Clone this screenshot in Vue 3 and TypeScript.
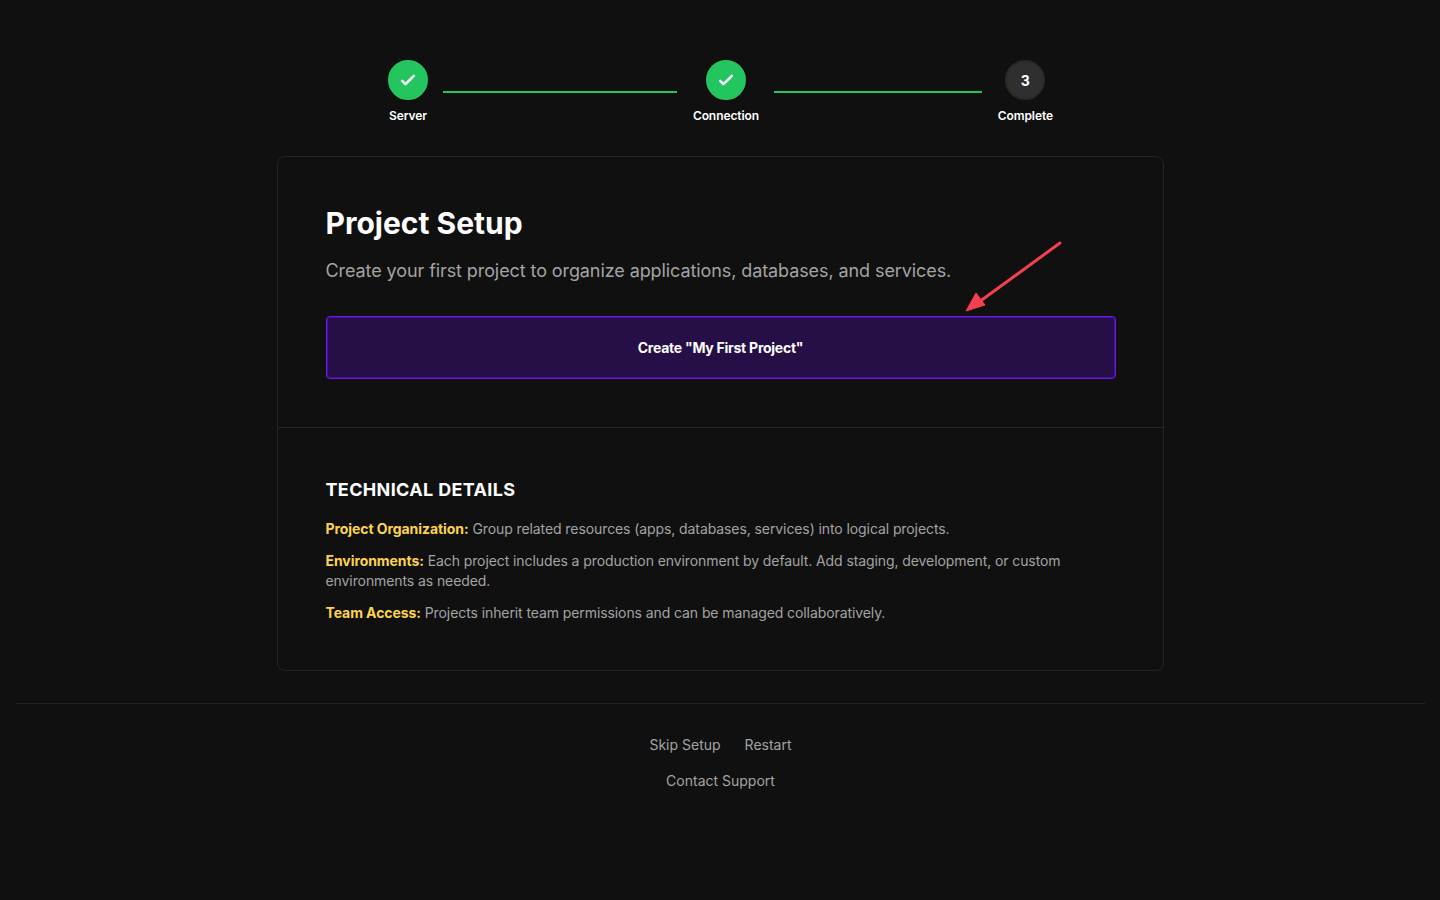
<template>
  <div class="page">
    <div class="stepper">
      <div v-for="step in steps" :key="step.label" class="step-wrap" :class="{ last: step.num === 3 }">
        <div class="step">
          <div class="circle" :class="{ done: step.done }">
            <svg v-if="step.done" width="20" height="20" viewBox="0 0 24 24" fill="none" stroke="#fff" stroke-width="3" stroke-linecap="round" stroke-linejoin="round">
              <path d="M5 13l4 4L19 7" />
            </svg>
            <span v-else>{{ step.num }}</span>
          </div>
          <span class="step-label">{{ step.label }}</span>
        </div>
        <div v-if="step.num !== 3" class="line"></div>
      </div>
    </div>

    <div class="card">
      <div class="card-top">
        <h1>Project Setup</h1>
        <p class="lead">Create your first project to organize applications, databases, and services.</p>
        <button class="create">Create "My First Project"</button>
        <svg class="arrow" width="110" height="84" viewBox="0 0 110 84">
          <path d="M98 6 L17 65" stroke="#f43f4e" stroke-width="3" stroke-linecap="round" fill="none" />
          <path d="M4 74 L14 56 L23 68 Z" fill="#f43f4e" stroke="#f43f4e" stroke-width="1" stroke-linejoin="round" />
        </svg>
      </div>
      <div class="card-bottom">
        <h2>TECHNICAL DETAILS</h2>
        <div class="details">
          <p v-for="item in details" :key="item.title"><strong>{{ item.title }}</strong> {{ item.text }}</p>
        </div>
      </div>
    </div>

    <footer class="foot">
      <div class="links">
        <a v-for="link in links" :key="link">{{ link }}</a>
      </div>
    </footer>
  </div>
</template>

<script setup lang="ts">
const steps = [
  { num: 1, label: 'Server', done: true },
  { num: 2, label: 'Connection', done: true },
  { num: 3, label: 'Complete', done: false },
]

const details = [
  { title: 'Project Organization:', text: 'Group related resources (apps, databases, services) into logical projects.' },
  { title: 'Environments:', text: 'Each project includes a production environment by default. Add staging, development, or custom environments as needed.' },
  { title: 'Team Access:', text: 'Projects inherit team permissions and can be managed collaboratively.' },
]

const links = ['Skip Setup', 'Restart', 'Contact Support']
</script>

<style>
html, body {
  background: #101010;
}
</style>

<style scoped>
.page {
  min-height: 900px;
  box-sizing: border-box;
  padding-top: 60px;
  background: #101010;
  font-family: Inter, "Liberation Sans", sans-serif;
  color: #fff;
}

.stepper {
  display: flex;
  width: 665px;
  margin: 0 0 32px calc(50% - 332px);
}

.step-wrap {
  flex: 1 1 0;
  display: flex;
  align-items: flex-start;
}

.step-wrap.last {
  flex: none;
}

.step {
  display: flex;
  flex-direction: column;
  align-items: center;
}

.circle {
  width: 40px;
  height: 40px;
  box-sizing: border-box;
  border-radius: 50%;
  display: flex;
  align-items: center;
  justify-content: center;
  background: #2f2f2f;
  border: 2px solid #2a2a2a;
  font-size: 14px;
  font-weight: 700;
}

.circle.done {
  background: #22c55e;
  border-color: #22c55e;
  box-shadow: 0 0 0 1px #0a0a0a;
}

.step-label {
  margin-top: 8px;
  font-size: 12px;
  line-height: 16px;
  font-weight: 600;
  letter-spacing: -0.08px;
  color: #fff;
  white-space: nowrap;
}

.line {
  flex: 1;
  height: 2px;
  margin: 31px 16px 0 15px;
  background: #22c55e;
}

.card {
  width: 887px;
  box-sizing: border-box;
  margin: 0 auto;
  border: 1px solid #242424;
  border-radius: 8px;
}

.card-top {
  position: relative;
  padding: 48px 47px 48px 48px;
  border-bottom: 1px solid #242424;
}

h1 {
  margin: 0;
  font-size: 30px;
  line-height: 36px;
  font-weight: 700;
}

.lead {
  margin: 16px 0 31px;
  font-size: 18px;
  line-height: 28px;
  letter-spacing: -0.09px;
  color: #a3a3a3;
}

.create {
  display: block;
  width: 100%;
  height: 63px;
  box-sizing: border-box;
  background: #260f47;
  border: 1px solid #6b16ed;
  box-shadow: inset 0 0 0 1px rgba(107, 22, 237, 0.45);
  border-radius: 4px;
  color: #fff;
  font-family: inherit;
  font-size: 14px;
  font-weight: 700;
  letter-spacing: -0.25px;
}

.arrow {
  position: absolute;
  left: 684px;
  top: 80px;
}

.card-bottom {
  padding: 48px 47px 47px 48px;
}

h2 {
  margin: 0 0 15px;
  font-size: 18px;
  line-height: 28px;
  font-weight: 700;
  letter-spacing: 0.35px;
}

.details p {
  margin: 0 0 12px;
  font-size: 14px;
  line-height: 20px;
  letter-spacing: -0.09px;
  color: #a3a3a3;
}

.details p:last-child {
  margin-bottom: 0;
}

.details strong {
  color: #fcd34d;
  font-weight: 700;
  letter-spacing: -0.07px;
}

.foot {
  margin: 32px 15px 0 16px;
  padding-top: 31px;
  border-top: 1px solid #242424;
}

.links {
  width: 180px;
  margin: 0 auto;
  display: flex;
  flex-wrap: wrap;
  justify-content: center;
  gap: 16px 24px;
  font-size: 14px;
  line-height: 20px;
  color: #a3a3a3;
}
</style>
